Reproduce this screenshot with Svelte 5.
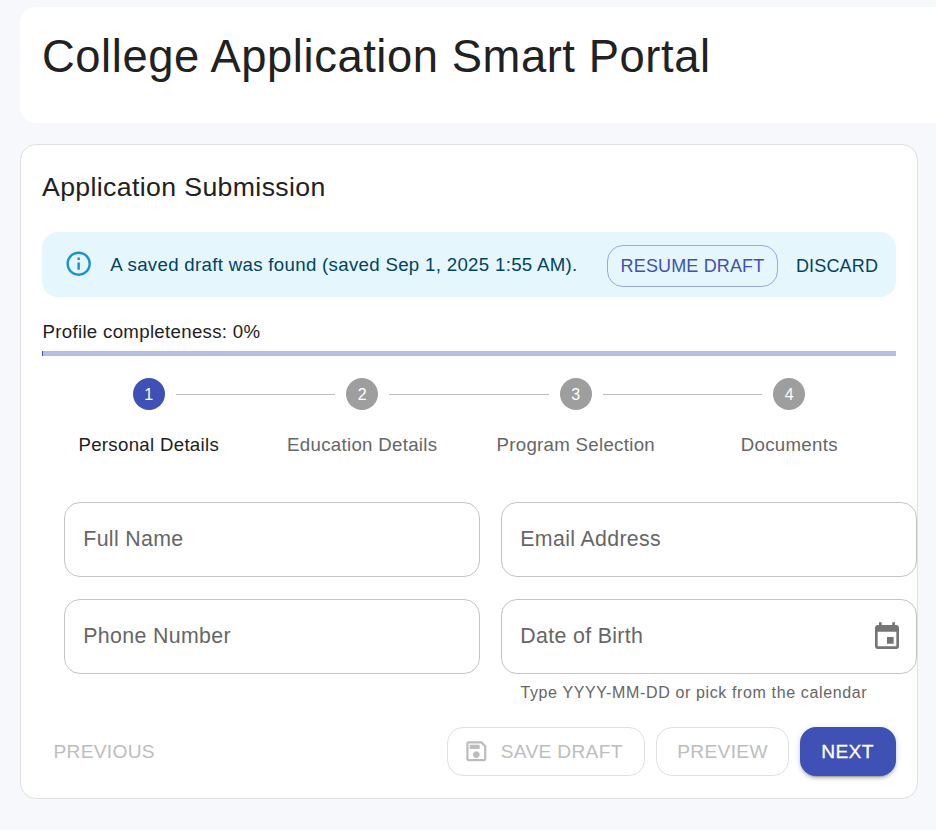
<script>
  const steps = ['Personal Details', 'Education Details', 'Program Selection', 'Documents'];
</script>

<div class="page">
  <header class="hero"><h1>College Application Smart Portal</h1></header>

  <main class="card">
    <h2>Application Submission</h2>

    <div class="alert">
      <svg class="info" viewBox="0 0 24 24"><path d="M11,9H13V7H11M12,20C7.59,20 4,16.41 4,12C4,7.59 7.59,4 12,4C16.41,4 20,7.59 20,12C20,16.41 16.41,20 12,20M12,2A10,10 0 0,0 2,12A10,10 0 0,0 12,22A10,10 0 0,0 22,12A10,10 0 0,0 12,2M11,17H13V11H11V17Z" /></svg>
      <span class="message">A saved draft was found (saved Sep 1, 2025 1:55 AM).</span>
      <button class="btn small outlined">Resume draft</button>
      <button class="btn small discard">Discard</button>
    </div>

    <p class="complete">Profile completeness: 0%</p>
    <div class="bar"></div>

    <ol class="stepper">
      {#each steps as step, i}
        <li class:active={i === 0}>
          <div class="track">
            <span class="line" class:hidden={i === 0}></span>
            <span class="dot">{i + 1}</span>
            <span class="line" class:hidden={i === steps.length - 1}></span>
          </div>
          <span class="label">{step}</span>
        </li>
      {/each}
    </ol>

    <div class="fields">
      <div class="field">Full Name</div>
      <div class="field">Email Address</div>
      <div class="field">Phone Number</div>
      <div>
        <div class="field">
          Date of Birth
          <svg class="calendar" viewBox="0 0 24 24"><path d="M17 12h-5v5h5v-5zM16 1v2H8V1H6v2H5c-1.11 0-1.99.9-1.99 2L3 19c0 1.1.89 2 2 2h14c1.1 0 2-.9 2-2V5c0-1.1-.9-2-2-2h-1V1h-2zm3 18H5V8h14v11z" /></svg>
        </div>
        <p class="helper">Type YYYY-MM-DD or pick from the calendar</p>
      </div>
    </div>

    <footer>
      <button class="btn text" disabled>Previous</button>
      <div class="actions">
        <button class="btn outline draft" disabled>
          <svg class="save" viewBox="0 0 24 24"><path d="M17 3H5c-1.11 0-2 .9-2 2v14c0 1.1.89 2 2 2h14c1.1 0 2-.9 2-2V7l-4-4zm2 16H5V5h11.17L19 7.83V19zm-7-7c-1.66 0-3 1.34-3 3s1.34 3 3 3 3-1.34 3-3-1.34-3-3-3zM6 6h9v4H6z" /></svg>
          Save draft
        </button>
        <button class="btn outline preview" disabled>Preview</button>
        <button class="btn next">Next</button>
      </div>
    </footer>
  </main>
</div>

<style>
  :global(body) { background: #f6f8fc; }
  .page, .page * { box-sizing: border-box; }
  .page {
    width: 936px;
    height: 830px;
    padding: 7px 0 0 20px;
    overflow: hidden;
    background: #f6f8fc;
    color: #212121;
    font-family: "Liberation Sans", Arial, sans-serif;
  }
  h1, h2, p, ol { margin: 0; padding: 0; font-weight: 400; }
  .hero {
    height: 116px;
    padding: 22px 22px 0;
    background: #fff;
    border-radius: 16px 0 0 16px;
  }
  h1 { font-size: 45.33px; line-height: 55px; letter-spacing: 0.58px; white-space: nowrap; }
  .card {
    width: 898px;
    height: 655px;
    margin-top: 21px;
    padding: 21px 21px 0;
    background: #fff;
    border: 1px solid #e0e0e0;
    border-radius: 16px;
  }
  h2 { font-size: 26.67px; line-height: 43px; letter-spacing: 0.37px; }
  .alert {
    display: flex;
    align-items: center;
    height: 65px;
    margin-top: 23px;
    padding: 0 5px 0 22px;
    border-radius: 16px;
    background: #e5f6fd;
    color: #014361;
  }
  .info { width: 29.33px; height: 29.33px; margin-bottom: 2px; fill: #0288d1; opacity: 0.9; }
  .message {
    flex: 1;
    margin-left: 17px;
    font-size: 18.67px;
    letter-spacing: 0.31px;
    white-space: nowrap;
  }
  .btn {
    display: flex;
    align-items: center;
    justify-content: center;
    height: 49px;
    padding: 0;
    border: 0;
    border-radius: 16px;
    background: transparent;
    color: inherit;
    font: 400 19.2px "Liberation Sans", Arial, sans-serif;
    letter-spacing: 0.3px;
    text-transform: uppercase;
    white-space: nowrap;
  }
  .btn:disabled { color: #bdbdbd; }
  .small { height: 42px; margin-top: 3px; font-size: 18px; letter-spacing: 0.15px; }
  .outlined { width: 171px; border: 1px solid #9fa8da; color: #3f51b5; }
  .discard { width: 96px; margin-left: 11px; margin-right: 6px; }
  .complete { margin: 21px 0 0 0.5px; font-size: 18.67px; line-height: 27px; letter-spacing: 0.31px; }
  .bar { height: 5px; margin-top: 6px; background: #b6bce2; border-left: 1px solid #3f51b5; }
  .stepper { display: flex; margin-top: 22px; list-style: none; }
  li { flex: 1; text-align: center; color: #666; }
  .active { color: #212121; }
  .track { display: flex; align-items: center; gap: 11px; }
  .line { flex: 1; height: 1px; background: #bdbdbd; }
  .hidden { visibility: hidden; }
  .dot {
    width: 32px;
    height: 32px;
    border-radius: 50%;
    background: #9e9e9e;
    color: #fff;
    font-size: 16px;
    line-height: 33px;
  }
  .active .dot { background: #3f51b5; }
  .label {
    display: block;
    margin-top: 21px;
    font-size: 18.67px;
    line-height: 27px;
    letter-spacing: 0.3px;
  }
  .fields {
    display: grid;
    grid-template-columns: 416px 416px;
    gap: 22px 21px;
    width: 853px;
    margin: 44px 0 0 22px;
  }
  .field {
    display: flex;
    align-items: center;
    justify-content: space-between;
    height: 75px;
    padding: 0 13px 0 18.3px;
    border: 1px solid #c4c4c4;
    border-radius: 16px;
    color: #666;
    font-size: 21.33px;
    letter-spacing: 0.34px;
  }
  .calendar { width: 32px; height: 32px; fill: #757575; }
  .helper {
    margin: 5px 0 0 19.4px;
    color: #666;
    font-size: 16px;
    line-height: 27px;
    letter-spacing: 0.63px;
    white-space: nowrap;
  }
  footer { display: flex; justify-content: space-between; margin-top: 21px; }
  .text { margin-left: 11.4px; }
  .actions { display: flex; gap: 11px; }
  .outline { border: 1px solid #e0e0e0; }
  .draft { width: 198px; justify-content: flex-start; padding-left: 15px; }
  .save { width: 26.67px; height: 26.67px; margin-right: 11px; fill: currentColor; }
  .preview { width: 133px; }
  .next {
    width: 96px;
    padding-right: 1px;
    background: #3f51b5;
    color: #fff;
    -webkit-text-stroke: 0.3px #fff;
    box-shadow: 0 4px 1px -3px rgba(0, 0, 0, 0.2), 0 3px 3px rgba(0, 0, 0, 0.14), 0 1px 7px rgba(0, 0, 0, 0.12);
  }
</style>
